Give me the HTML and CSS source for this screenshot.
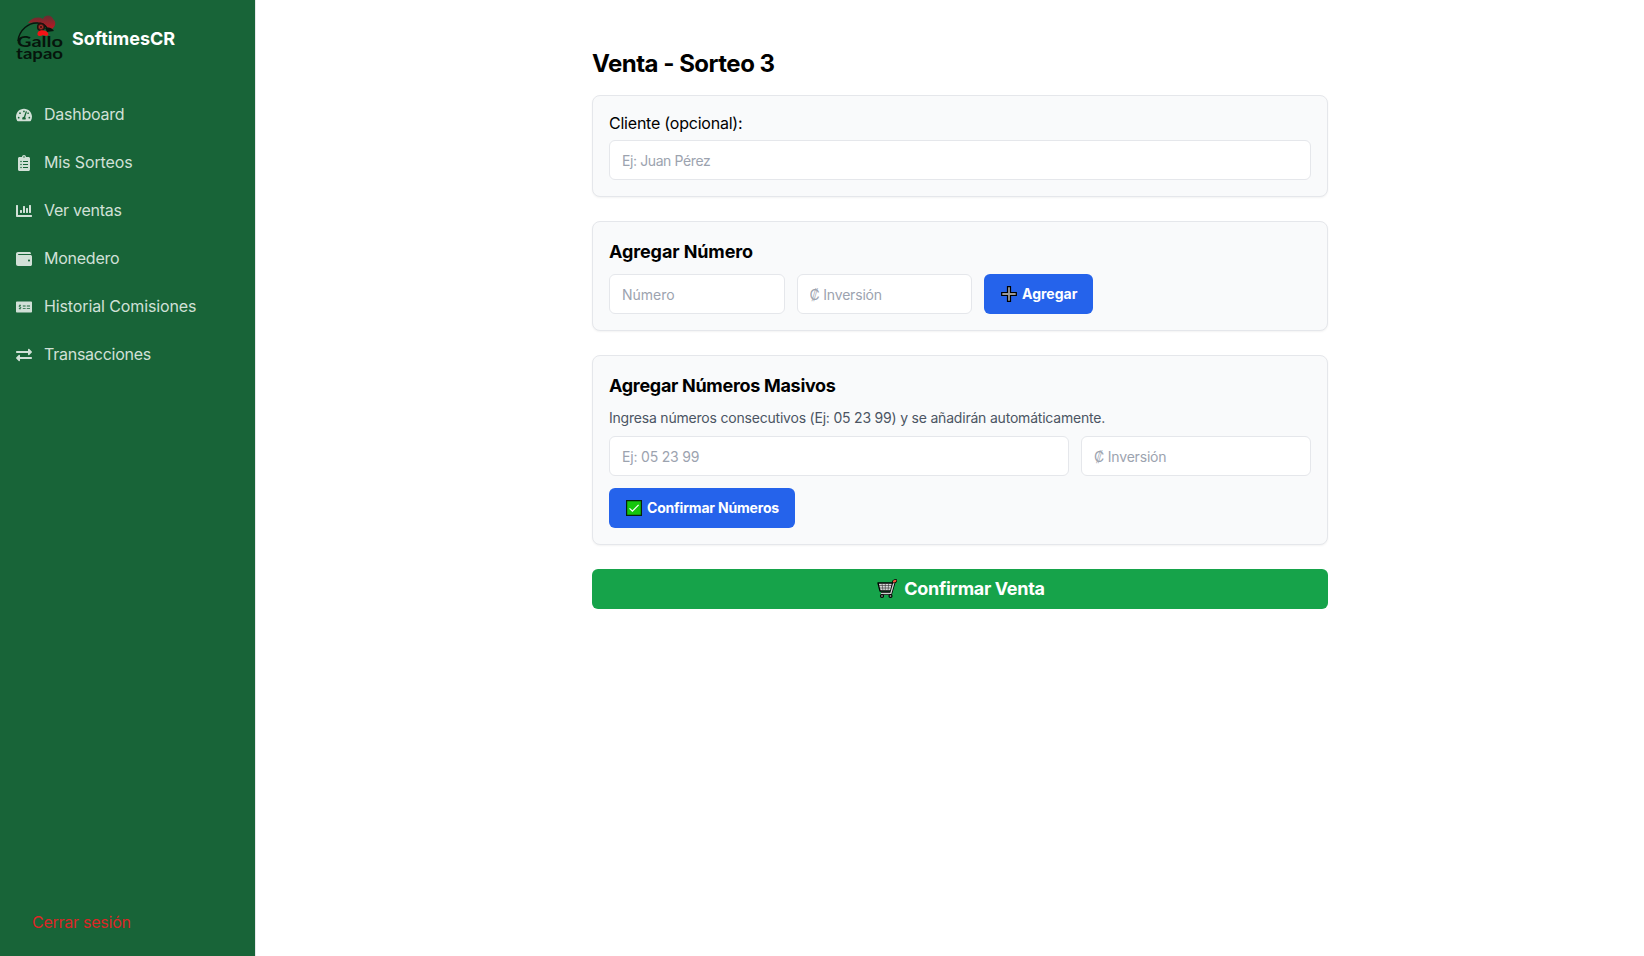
FILE: index.html
```html
<!DOCTYPE html>
<html lang="es">
<head>
<meta charset="utf-8">
<title>Venta - Sorteo 3</title>
<link rel="stylesheet" href="styles.css">
</head>
<body>
<aside class="sidebar">
  <div class="brand">
    <svg class="logo" viewBox="0 0 48 48" aria-label="Gallo Tapao">
      <defs><linearGradient id="crest" x1="0" y1="0" x2="0" y2="1"><stop offset="0" stop-color="#642f32"/><stop offset="1" stop-color="#bd1822"/></linearGradient></defs>
      <path fill="url(#crest)" d="M12 8C15 3 22 1 27 4C29-1 36 0 37 4C41 7 39 12 36 14L30 12C26 7 19 7 12 8Z"/>
      <path fill="none" stroke="#07150d" stroke-width="1.5" d="M2 26C3 15 13 7 22 8C27 8 29 10 31 13"/>
      <circle cx="25" cy="12" r="3.4" fill="#6b2a20" stroke="#210f0e" stroke-width="1.4"/>
      <circle cx="25" cy="12" r="1.5" fill="#210f0e" stroke="#b62a25" stroke-width="1"/>
      <path fill="#08150d" d="M29 13Q35 11 38 16L31 17Z"/>
      <path fill="#f21316" d="M22 17C24 14 31 15 32 18C34 22 28 21 27 20C24 22 20 21 22 17Z"/>
      <text class="logo-text" x="1" y="32" textLength="46" lengthAdjust="spacingAndGlyphs">Gallo</text>
      <text class="logo-text" x="0" y="44" textLength="47" lengthAdjust="spacingAndGlyphs">tapao</text>
    </svg>
    <span class="brand-name">SoftimesCR</span>
  </div>
  <nav class="nav">
    <a class="nav-item"><svg viewBox="0 0 576 512"><path d="M288 32C128.94 32 0 160.94 0 320c0 52.8 14.25 102.26 39.06 144.8 5.61 9.62 16.3 15.2 27.44 15.2h443c11.14 0 21.83-5.58 27.44-15.2C561.75 422.26 576 372.8 576 320c0-159.06-128.94-288-288-288zm0 64c14.71 0 26.58 10.13 30.32 23.65-1.11 2.26-2.64 4.23-3.45 6.67l-9.22 27.67c-5.13 3.49-10.97 6.01-17.64 6.01-17.67 0-32-14.33-32-32S270.33 96 288 96zM96 384c-17.67 0-32-14.33-32-32s14.33-32 32-32 32 14.33 32 32-14.33 32-32 32zm48-160c-17.67 0-32-14.33-32-32s14.33-32 32-32 32 14.33 32 32-14.33 32-32 32zm246.77-72.41l-61.33 184C343.13 347.33 352 364.54 352 384c0 11.72-3.38 22.55-8.88 32H232.88c-5.5-9.45-8.88-20.28-8.88-32 0-33.94 26.5-61.43 59.9-63.59l61.34-184.01c4.17-12.56 17.73-19.45 30.36-15.17 12.57 4.19 19.35 17.79 15.17 30.36zm14.66 57.2l15.52-46.55c3.47-1.29 7.13-2.23 11.05-2.23 17.67 0 32 14.33 32 32s-14.33 32-32 32c-11.38-.01-20.89-6.28-26.57-15.22zM480 384c-17.67 0-32-14.33-32-32s14.33-32 32-32 32 14.33 32 32-14.33 32-32 32z"/></svg><span class="tight">Dashboard</span></a>
    <a class="nav-item"><svg viewBox="0 0 384 512"><path fill-rule="evenodd" d="M336 64h-80c0-35.3-28.7-64-64-64s-64 28.7-64 64H48C21.5 64 0 85.5 0 112v352c0 26.5 21.5 48 48 48h288c26.5 0 48-21.5 48-48V112c0-26.5-21.5-48-48-48zM96 424a24 24 0 1 1 0-48 24 24 0 0 1 0 48zm0-96a24 24 0 1 1 0-48 24 24 0 0 1 0 48zm0-96a24 24 0 1 1 0-48 24 24 0 0 1 0 48zm96-192a24 24 0 1 1 0 48 24 24 0 0 1 0-48zM160 384h160v32H160zM160 288h160v32H160zM160 192h160v32H160z"/></svg><span class="snug">Mis Sorteos</span></a>
    <a class="nav-item"><svg viewBox="0 0 512 512"><path d="M333 320h38q13 0 13-13V173q0-13-13-13h-38q-13 0-13 13v134q0 13 13 13zM429 320h38q13 0 13-13V77q0-13-13-13h-38q-13 0-13 13v230q0 13 13 13zM141 320h38q13 0 13-13v-70q0-13-13-13h-38q-13 0-13 13v70q0 13 13 13zM237 320h38q13 0 13-13V109q0-13-13-13h-38q-13 0-13 13v198q0 13 13 13zM496 384H64V80c0-8.84-7.16-16-16-16H16C7.16 64 0 71.16 0 80v336c0 17.67 14.33 32 32 32h464c8.84 0 16-7.16 16-16v-32c0-8.84-7.16-16-16-16z"/></svg><span class="tight">Ver ventas</span></a>
    <a class="nav-item"><svg viewBox="0 0 512 512"><path d="M461.2 128H80c-8.84 0-16-7.16-16-16s7.16-16 16-16h384c8.84 0 16-7.16 16-16 0-26.51-21.49-48-48-48H64C28.65 32 0 60.65 0 96v320c0 35.35 28.65 64 64 64h397.2c28.02 0 50.8-21.53 50.8-48V176c0-26.47-22.78-48-50.8-48zM416 336c-17.67 0-32-14.33-32-32s14.33-32 32-32 32 14.33 32 32-14.33 32-32 32z"/></svg><span class="tight">Monedero</span></a>
    <a class="nav-item"><svg viewBox="0 0 640 512"><path fill-rule="evenodd" d="M608 32H32C14 32 0 46 0 64v384c0 18 14 32 32 32h576c18 0 32-14 32-32V64c0-18-14-32-32-32zM272 200h112v32H272zM432 200h128v32H432zM272 296h112v32H272zM432 296h128v32H432zM144 160h32v26q18 2 32 13l-20 24q-12-9-34-7c-21 3-18 18 0 23l28 8c46 14 45 67-6 79v26h-32v-26q-22-2-38-15l22-24q15 11 40 8c20-4 15-20-2-25l-28-9c-40-13-41-64 6-74z"/></svg><span class="snug">Historial Comisiones</span></a>
    <a class="nav-item"><svg viewBox="0 0 512 512"><path d="M0 168v-16c0-13.255 10.745-24 24-24h360V80c0-21.367 25.899-32.042 40.971-16.971l80 80c9.372 9.373 9.372 24.569 0 33.941l-80 80C409.956 271.982 384 261.456 384 240v-48H24c-13.255 0-24-10.745-24-24zm488 152H128v-48c0-21.314-25.862-32.08-40.971-16.971l-80 80c-9.372 9.373-9.372 24.569 0 33.941l80 80C102.057 463.997 128 453.437 128 432v-48h360c13.255 0 24-10.745 24-24v-16c0-13.255-10.745-24-24-24z"/></svg><span class="tight">Transacciones</span></a>
  </nav>
  <a class="logout tight">Cerrar sesión</a>
</aside>
<main class="main">
  <h1 class="title">Venta - Sorteo 3</h1>
  <section class="card">
    <label class="label" for="cliente">Cliente (opcional):</label>
    <input class="input client" id="cliente" placeholder="Ej: Juan Pérez">
  </section>
  <section class="card">
    <h2 class="subtitle">Agregar Número</h2>
    <div class="row">
      <input class="input quarter number" placeholder="Número">
      <input class="input quarter" placeholder="₡ Inversión">
      <button class="btn btn-add"><svg class="emoji" viewBox="0 0 16 16"><path d="M6.5.7h3v5.8h5.8v3H9.500v5.800h-3V9.500H.7v-3h5.800z" fill="#9b9b9b" stroke="#000" stroke-width="1.200"/></svg><span>Agregar</span></button>
    </div>
  </section>
  <section class="card">
    <h2 class="subtitle massive">Agregar Números Masivos</h2>
    <p class="hint">Ingresa números consecutivos (Ej: 05 23 99) y se añadirán automáticamente.</p>
    <div class="grid">
      <input class="input" placeholder="Ej: 05 23 99">
      <input class="input" placeholder="₡ Inversión">
    </div>
    <button class="btn btn-confirm"><svg class="emoji" viewBox="0 0 16 16"><path d="M.6.6h14.800v14.800H.6z" fill="#16c60c" stroke="#06210a" stroke-width="1.200"/><path d="M3.500 8.300l2.900 2.900 6.200-6.300" fill="none" stroke="#fff" stroke-width="1.200"/></svg><span>Confirmar Números</span></button>
  </section>
  <button class="btn-sale"><svg class="cart" viewBox="0 0 20 20"><path d="M1 4h14.500L14 12H3z" fill="#d8d8d8" stroke="#000" stroke-width="1.300" stroke-linejoin="round"/><path d="M2 6.500h13M2.500 9h12M5 4.500L6 12M8.300 4.500V12M11.700 4.500L11 12" stroke="#333" stroke-width=".6"/><path d="M17.500 2L13.800 14.500H4" fill="none" stroke="#000" stroke-width="2.800" stroke-linejoin="round"/><path d="M17.200 2.500L13.800 14.500H4" fill="none" stroke="#d0d0d0" stroke-width="1.300"/><circle cx="5" cy="17" r="1.500" fill="#888" stroke="#000" stroke-width="1.200"/><circle cx="13.500" cy="17" r="1.500" fill="#888" stroke="#000" stroke-width="1.200"/><path d="M17 2.500l1.400-.7" stroke="#000" stroke-width="3.600" stroke-linecap="round"/><path d="M17 2.500l1.400-.7" stroke="#f0583c" stroke-width="2.200" stroke-linecap="round"/></svg><span>Confirmar Venta</span></button>
</main>
</body>
</html>
```
FILE: styles.css
```css
* { box-sizing: border-box; }
body {
  margin: 0;
  display: flex;
  height: 956px;
  background: #fff;
  color: #000;
  font: 16px/24px Inter, "Liberation Sans", sans-serif;
}
h1, h2, p { margin: 0; }
.sidebar {
  width: 256px;
  flex: none;
  display: flex;
  flex-direction: column;
  background: #186438;
  border-right: 1px solid #e5e7eb;
}
.brand { display: flex; align-items: center; gap: 8px; padding: 15px 16px 0; height: 63px; }
.logo { width: 48px; height: 48px; overflow: visible; }
.logo-text { font: 700 16px Lato, sans-serif; fill: #06150c; }
.brand-name { color: #fff; font-size: 18px; font-weight: 700; line-height: 28px; }
.nav { display: flex; flex-direction: column; gap: 8px; padding: 32px 16px 0; }
.nav-item {
  display: flex;
  align-items: center;
  gap: 12px;
  height: 40px;
  color: #d1e0d7;
  white-space: nowrap;
}
.nav-item svg { width: 16px; height: 16px; fill: currentColor; flex: none; }
.nav-item span { padding-bottom: 2px; }
.tight { letter-spacing: -.25px; }
.snug { letter-spacing: -.12px; }
.logout { margin: auto 0 22px 32px; color: #dc2626; }
.main { width: 736px; margin-left: 336px; padding-top: 48px; }
.title { font-size: 24px; line-height: 32px; font-weight: 700; letter-spacing: -.5px; margin-bottom: 15px; }
.card {
  padding: 16px;
  margin-bottom: 24px;
  background: #f9fafb;
  border: 1px solid #e5e7eb;
  border-radius: 8px;
  box-shadow: 0 1px 2px rgba(0, 0, 0, .05);
}
.label { display: block; line-height: 22px; margin-bottom: 6px; letter-spacing: -.22px; }
.input {
  display: block;
  width: 100%;
  height: 40px;
  padding: 8px 12px;
  background: #fff;
  border: 1px solid #e5e7eb;
  border-radius: 6px;
  font: 14px/20px Inter, sans-serif;
  letter-spacing: -.19px;
}
.input::placeholder { color: #9ca3af; opacity: 1; }
.client { letter-spacing: -.4px; }
.number { letter-spacing: 0; }
.subtitle { font-size: 18px; line-height: 28px; font-weight: 700; letter-spacing: -.1px; margin-bottom: 8px; }
.massive { letter-spacing: -.3px; }
.row { display: flex; gap: 12px; }
.quarter { width: 25%; }
.grid { display: grid; grid-template-columns: 2fr 1fr; gap: 12px; margin-bottom: 12px; }
.hint { font-size: 14px; line-height: 20px; color: #4b5563; letter-spacing: -.205px; margin-bottom: 8px; white-space: nowrap; }
.btn, .btn-sale {
  display: flex;
  align-items: center;
  height: 40px;
  border: 0;
  border-radius: 6px;
  color: #fff;
  white-space: nowrap;
}
.btn { padding: 0 0 0 17px; gap: 5px; background: #2563eb; font: 700 14px/20px Inter, sans-serif; }
.btn-add { width: 109px; }
.btn-confirm { width: 186px; letter-spacing: -.19px; }
.emoji { width: 16px; height: 16px; flex: none; }
.btn-sale { width: 100%; padding: 0 0 0 2px; justify-content: center; gap: 7px; background: #16a34a; font: 700 18px/28px Inter, sans-serif; letter-spacing: -.32px; }
.cart { width: 20px; height: 20px; }
```
